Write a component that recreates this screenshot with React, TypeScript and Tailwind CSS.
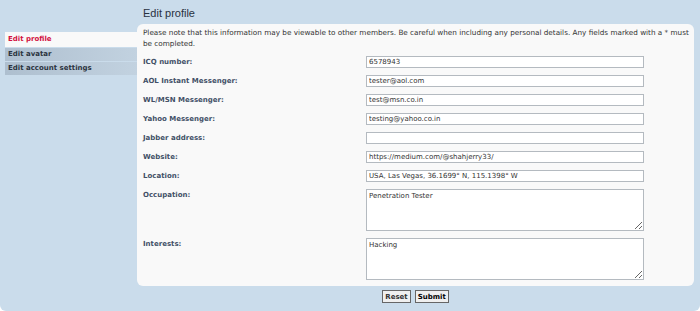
import { useState } from 'react';

const fields = [
  { label: 'ICQ number:', value: '6578943' },
  { label: 'AOL Instant Messenger:', value: 'tester@aol.com' },
  { label: 'WL/MSN Messenger:', value: 'test@msn.co.in' },
  { label: 'Yahoo Messenger:', value: 'testing@yahoo.co.in' },
  { label: 'Jabber address:', value: '' },
  { label: 'Website:', value: 'https://medium.com/@shahjerry33/' },
  { label: 'Location:', value: 'USA, Las Vegas, 36.1699° N, 115.1398° W' },
];

const areas = [
  { label: 'Occupation:', value: 'Penetration Tester' },
  { label: 'Interests:', value: 'Hacking' },
];

export default function App() {
  const [active] = useState('Edit profile');
  const tabs = ['Edit profile', 'Edit avatar', 'Edit account settings'];

  return (
    <div className="bg-white">
      <div
        className="flex h-[311px] w-[700px] rounded-b-[6px] bg-[#cadceb] text-[7px] text-[#333]"
        style={{ fontFamily: '"DejaVu Sans", Verdana, sans-serif' }}
      >
        {/* side menu */}
        <ul className="w-[137px] shrink-0 pl-[5px] pt-[32px]">
          {tabs.map((t) =>
            t === active ? (
              <li
                key={t}
                className="mb-px flex h-[15px] items-center bg-[#f9f9f9] pl-[3px] font-bold text-[#d31141]"
              >
                {t}
              </li>
            ) : (
              <li
                key={t}
                className="mb-px flex h-[13px] items-center bg-gradient-to-r from-[#aebfcf] to-[#c2d2e0] pl-[3px] font-bold text-[#2c3440]"
              >
                {t}
              </li>
            )
          )}
        </ul>

        <div className="flex w-[557px] flex-col">
          <h2
            className="h-[24px] pl-[6px] pt-[7px] text-[11px] leading-[12px] text-[#28313f]"
            style={{ fontFamily: '"Liberation Sans", Arial, sans-serif' }}
          >
            Edit profile
          </h2>

          <div className="rounded-[6px] bg-[#f9f9f9] pb-[6px] pl-[6px] pr-[2px] pt-[3px]">
            <p className="text-[7.25px] leading-[11px] text-[#333]">
              Please note that this information may be viewable to other members. Be careful when
              including any personal details. Any fields marked with a * must be completed.
            </p>

            <div className="mt-[7px] flex flex-col gap-[7px]">
              {fields.map((f) => (
                <div key={f.label} className="flex">
                  <label className="w-[223px] pt-[1px] font-bold leading-[10px] text-[#425067]">
                    {f.label}
                  </label>
                  <input
                    readOnly
                    value={f.value}
                    className="h-[12px] w-[278px] border border-[#b4bac0] bg-white px-[2px] text-[7px] text-[#333] outline-none"
                  />
                </div>
              ))}
              {areas.map((a) => (
                <div key={a.label} className="flex">
                  <label className="w-[223px] pt-[1px] font-bold leading-[10px] text-[#425067]">
                    {a.label}
                  </label>
                  <textarea
                    readOnly
                    value={a.value}
                    className="h-[42px] w-[278px] resize border border-[#b4bac0] bg-white px-[2px] py-[1px] text-[7px] leading-[10px] text-[#333] outline-none"
                  />
                </div>
              ))}
            </div>
          </div>

          <div className="mt-[4px] flex justify-center gap-[4px]">
            <button className="h-[13px] border border-[#666] bg-[#efefef] px-[2px] text-[7px] font-bold leading-[10px] text-[#333]">
              Reset
            </button>
            <button className="h-[13px] border border-[#666] bg-[#efefef] px-[2px] text-[7px] font-bold leading-[10px] text-black">
              Submit
            </button>
          </div>
        </div>
      </div>
    </div>
  );
}
